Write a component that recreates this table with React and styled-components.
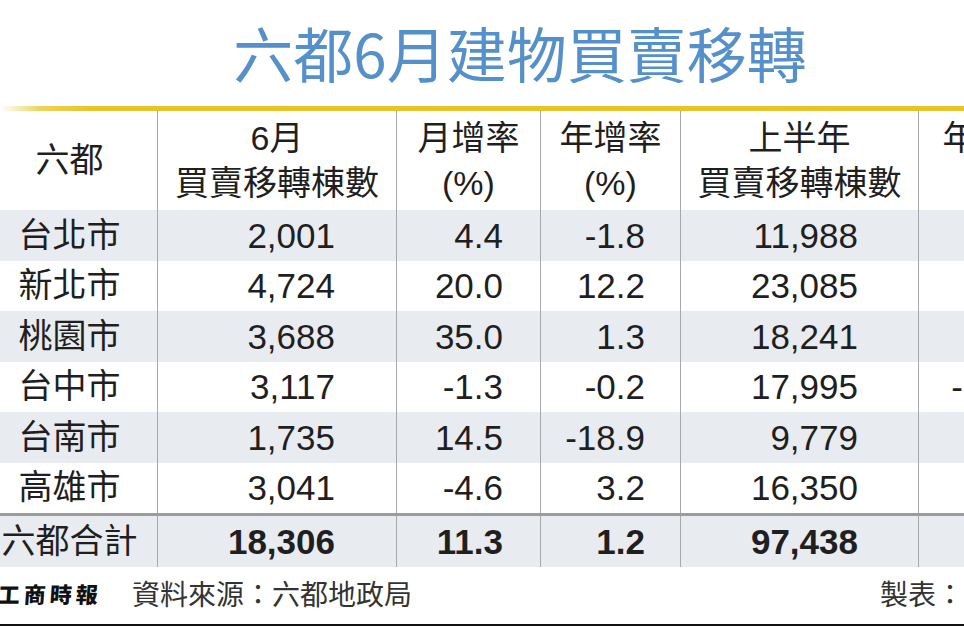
import React from 'react';
import styled, { createGlobalStyle } from 'styled-components';

const Global = createGlobalStyle`
  html, body { margin: 0; padding: 0; background: #fff; overflow: hidden; }
  body { font-family: "Liberation Sans", "Noto Sans CJK TC", sans-serif; color: #222; }
`;

const Page = styled.div`
  width: 964px;
  height: 627px;
  overflow: hidden;
  display: flex;
  flex-direction: column;
`;

const Title = styled.h1`
  margin: 0;
  height: 106px;
  padding: 0 0 4px 76px;
  box-sizing: border-box;
  display: flex;
  align-items: center;
  justify-content: center;
  font-family: "Noto Sans CJK TC", sans-serif;
  font-weight: 400;
  font-size: 60px;
  color: #5590cb;
  white-space: nowrap;
`;

const Rule = styled.div`
  height: 5px;
  flex: none;
  background: linear-gradient(to right, #ffffff 0px, #ecd35e 40px, #e6c52b 90px, #e6c52b 100%);
`;

const Table = styled.div`
  display: flex;
  flex-direction: column;
  width: 1068px;
  flex: none;
`;

const Row = styled.div`
  display: grid;
  grid-template-columns: 157px 239px 144px 140px 238px 150px;
  height: ${p => p.$h}px;
  box-sizing: border-box;
  background: ${p => (p.$striped ? '#e8ebf0' : '#fff')};
  border-top: ${p => (p.$total ? '3px solid #9c9c9c' : 'none')};
`;

const Cell = styled.div`
  display: flex;
  flex-direction: column;
  justify-content: center;
  align-items: ${p => (p.$right ? 'flex-end' : 'center')};
  padding-right: ${p => p.$pr || 0}px;
  border-left: ${p => (p.$first ? 'none' : '1.5px solid #a8a8a8')};
  font-size: 35px;
  font-weight: ${p => (p.$bold ? 700 : 400)};
  line-height: 45px;
  white-space: nowrap;
  color: #1f1f1f;
`;

const HeadLine = styled.span`
  font-size: 34px;
  line-height: 45px;
`;

const Name = styled.span`
  font-size: 34px;
`;

const Footer = styled.div`
  flex: 1;
  display: flex;
  align-items: center;
  padding-bottom: 5px;
  border-bottom: 2px solid #111;
  margin-bottom: 1px;
  white-space: nowrap;
`;

const Logo = styled.span`
  font-family: "Noto Sans CJK TC", sans-serif;
  font-weight: 900;
  font-size: 22px;
  letter-spacing: 4px;
  color: #111;
  margin-left: -2px;
  margin-right: 30px;
  transform: skewX(-4deg);
`;

const Note = styled.span`
  font-family: "Noto Sans CJK TC", sans-serif;
  font-size: 28px;
  color: #333;
  margin-left: ${p => (p.$end ? 'auto' : '0')};
`;

const pads = [18, 61, 37, 35, 60, 37];

const rows = [
  ['台北市', '2,001', '4.4', '-1.8', '11,988', '3.1'],
  ['新北市', '4,724', '20.0', '12.2', '23,085', '9.6'],
  ['桃園市', '3,688', '35.0', '1.3', '18,241', '6.4'],
  ['台中市', '3,117', '-1.3', '-0.2', '17,995', '-10.1'],
  ['台南市', '1,735', '14.5', '-18.9', '9,779', '0.9'],
  ['高雄市', '3,041', '-4.6', '3.2', '16,350', '2.5'],
];

const total = ['六都合計', '18,306', '11.3', '1.2', '97,438', '4.2'];

const headers = [
  ['六都'],
  ['6月', '買賣移轉棟數'],
  ['月增率', '(%)'],
  ['年增率', '(%)'],
  ['上半年', '買賣移轉棟數'],
  ['年增率', '(%)'],
];

function DataRow({ data, striped, total: isTotal }) {
  return (
    <Row $h={isTotal ? 54 : 50.5} $striped={striped} $total={isTotal}>
      {data.map((v, i) =>
        i === 0 ? (
          <Cell key={i} $first $pr={pads[0]}>
            <Name>{v}</Name>
          </Cell>
        ) : (
          <Cell key={i} $right $pr={pads[i]} $bold={isTotal}>
            {v}
          </Cell>
        )
      )}
    </Row>
  );
}

export default function App() {
  return (
    <Page>
      <Global />
      <Title>六都6月建物買賣移轉</Title>
      <Rule />
      <Table>
        <Row $h={99}>
          {headers.map((h, i) => (
            <Cell key={i} $first={i === 0} $pr={i === 0 ? pads[0] : 0}>
              {h.map((t, j) => (
                <HeadLine key={j}>{t}</HeadLine>
              ))}
            </Cell>
          ))}
        </Row>
        {rows.map((r, i) => (
          <DataRow key={r[0]} data={r} striped={i % 2 === 0} />
        ))}
        <DataRow data={total} striped total />
      </Table>
      <Footer>
        <Logo>工商時報</Logo>
        <Note>資料來源：六都地政局</Note>
        <Note $end>製表：</Note>
      </Footer>
    </Page>
  );
}
